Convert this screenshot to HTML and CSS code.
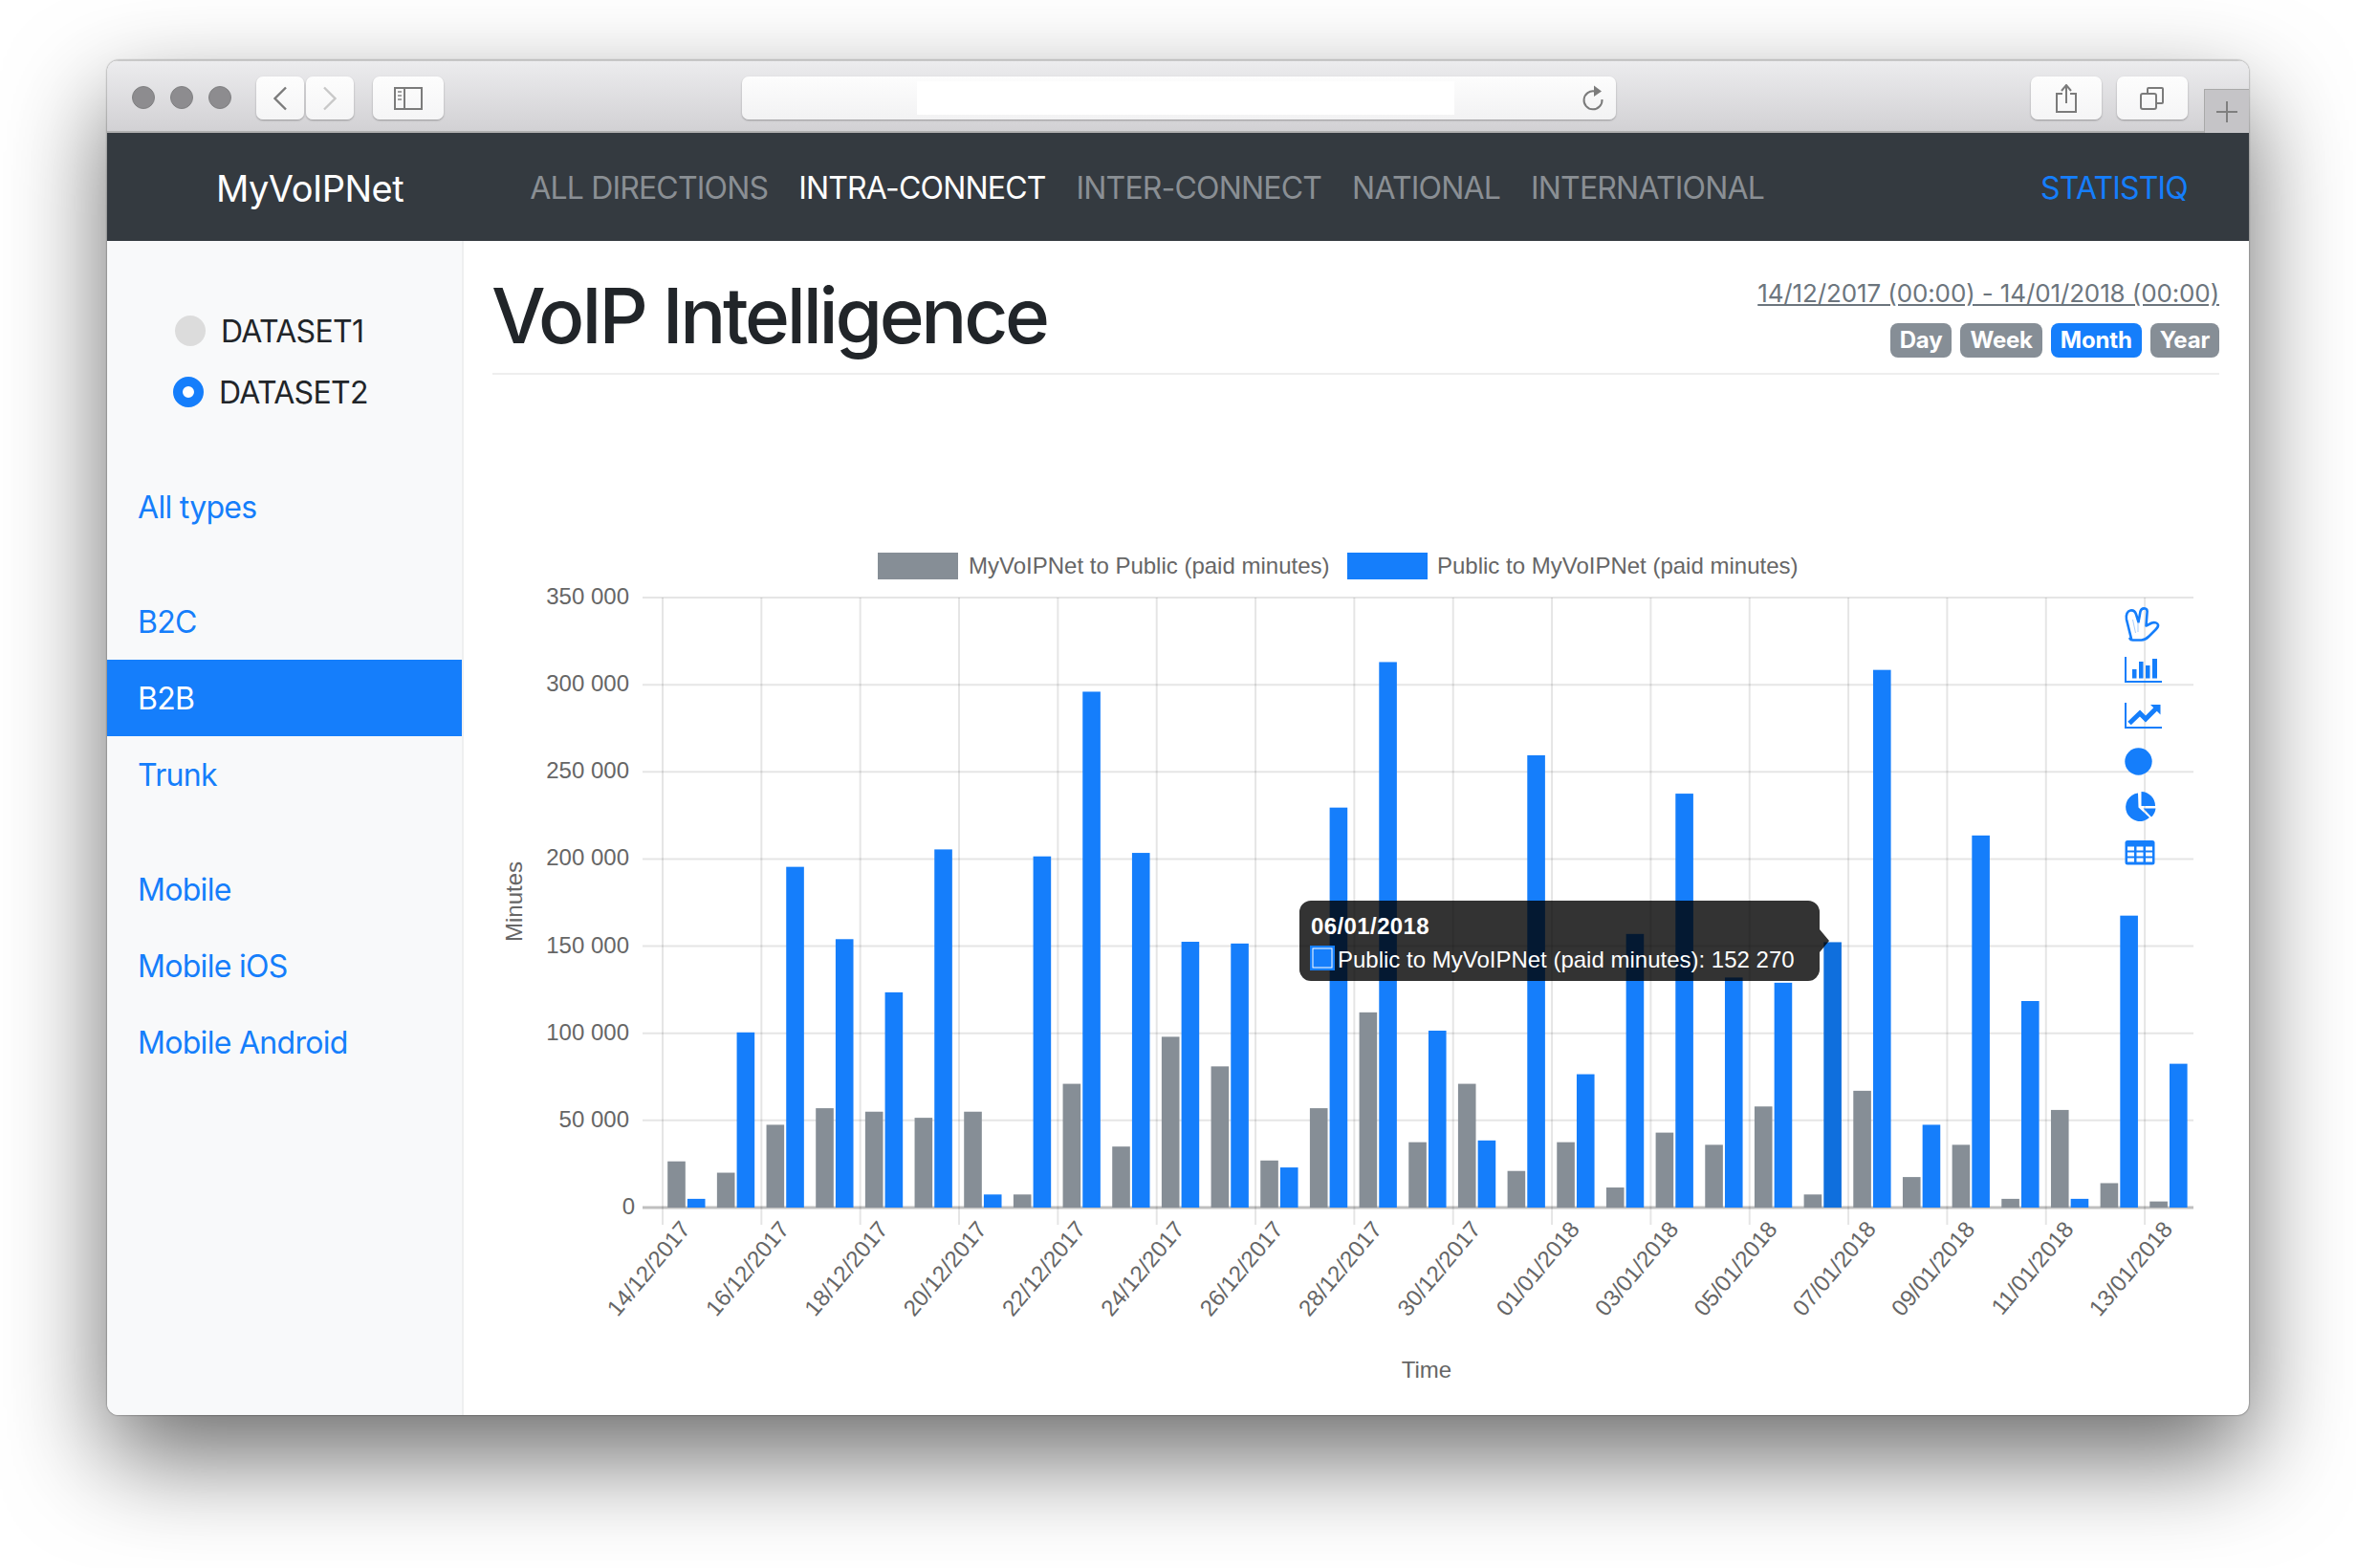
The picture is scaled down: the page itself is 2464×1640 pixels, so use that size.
FILE: index.html
```html
<!DOCTYPE html>
<html lang="en">
<head>
    <meta charset="UTF-8">
    <meta name="viewport" content="width=device-width, initial-scale=1.0">
    <title>VoIP Intelligence</title>
    <link rel="stylesheet" href="styles.css">
</head>
<body>
    <div class="window">
        <div class="toolbar">
            <span class="light"></span>
            <span class="light"></span>
            <span class="light"></span>
            <div class="tool-btn btn-nav first-nav">
                <svg width="16" height="26" viewBox="0 0 16 26"><path d="M14 1.500 2.500 13 14 24.500" fill="none" stroke="#7b7b7b" stroke-width="2.400"/></svg>
            </div>
            <div class="tool-btn btn-nav">
                <svg width="16" height="26" viewBox="0 0 16 26"><path d="M2 1.500 13.500 13 2 24.500" fill="none" stroke="#c8c8c8" stroke-width="2.400"/></svg>
            </div>
            <div class="tool-btn btn-side">
                <svg width="30" height="24" viewBox="0 0 30 24"><rect x="1" y="1" width="28" height="22" fill="none" stroke="#7b7b7b" stroke-width="2"/><path d="M11 1v22" stroke="#7b7b7b" stroke-width="2"/><path d="M4 5h4M4 9h4M4 13h4" stroke="#a0a0a0" stroke-width="2"/></svg>
            </div>
            <div class="address">
                <div class="address-fill"></div>
                <svg class="reload" width="24" height="28" viewBox="0 0 24 28"><path d="M14 6.500A9.500 9.500 0 1 0 21.500 15" fill="none" stroke="#7b7b7b" stroke-width="2"/><path d="M13 0.500 21 6.500 13 12z" fill="#7b7b7b"/></svg>
            </div>
            <div class="tool-btn btn-wide">
                <svg width="24" height="30" viewBox="0 0 24 30"><path d="M8 10H2v19h20V10h-6" fill="none" stroke="#7b7b7b" stroke-width="2"/><path d="M12 2v18M7 7l5-6 5 6" fill="none" stroke="#7b7b7b" stroke-width="2"/></svg>
            </div>
            <div class="tool-btn btn-wide btn-tabs">
                <svg width="26" height="24" viewBox="0 0 26 24"><rect x="1" y="7" width="16" height="16" rx="2" fill="none" stroke="#7b7b7b" stroke-width="2"/><path d="M8 7V2a1 1 0 0 1 1-1h14a1 1 0 0 1 1 1v14a1 1 0 0 1-1 1h-6" fill="none" stroke="#7b7b7b" stroke-width="2"/></svg>
            </div>
            <div class="new-tab">
                <svg width="24" height="24" viewBox="0 0 24 24"><path d="M12 1v22M1 12h22" stroke="#7f7f7f" stroke-width="2"/></svg>
            </div>
        </div>

        <nav class="navbar">
            <a class="brand">MyVoIPNet</a>
            <a class="nav-link">ALL DIRECTIONS</a>
            <a class="nav-link active">INTRA-CONNECT</a>
            <a class="nav-link">INTER-CONNECT</a>
            <a class="nav-link">NATIONAL</a>
            <a class="nav-link">INTERNATIONAL</a>
            <a class="nav-link statistiq">STATISTIQ</a>
        </nav>

        <div class="page">
            <aside class="sidebar">
                <div class="radios">
                    <div class="radio"><span class="radio-mark"></span>DATASET1</div>
                    <div class="radio radio-on"><span class="radio-mark"></span>DATASET2</div>
                </div>
                <a class="side-link group">All types</a>
                <a class="side-link group">B2C</a>
                <a class="side-link active">B2B</a>
                <a class="side-link">Trunk</a>
                <a class="side-link group">Mobile</a>
                <a class="side-link">Mobile iOS</a>
                <a class="side-link">Mobile Android</a>
            </aside>

            <main class="main">
                <header class="head">
                    <h1 class="title">VoIP Intelligence</h1>
                    <div class="range">
                        <a class="dates">14/12/2017 (00:00) - 14/01/2018 (00:00)</a>
                        <div class="badges">
                            <span class="badge">Day</span>
                            <span class="badge">Week</span>
                            <span class="badge badge-on">Month</span>
                            <span class="badge">Year</span>
                        </div>
                    </div>
                </header>
                <div id="chart"></div>
            </main>
        </div>
    </div>
    <script src="chart.js"></script>
</body>
</html>
```

FILE: styles.css
```css
body {
    margin: 0;
    padding: 63px 112px 0;
    height: 1640px;
    box-sizing: border-box;
    background: #fff;
    font-family: Inter, 'Noto Sans', sans-serif;
    color: #212529;
    overflow: hidden;
}

.window {
    height: 1417px;
    display: flex;
    flex-direction: column;
    border-radius: 12px;
    overflow: hidden;
    box-shadow: 0 0 2px rgba(0, 0, 0, 0.6), 0 44px 104px rgba(0, 0, 0, 0.58);
}

.toolbar {
    height: 76px;
    flex: none;
    box-sizing: border-box;
    display: flex;
    align-items: flex-start;
    padding-top: 16px;
    padding-left: 26px;
    background: linear-gradient(to bottom, #ececee, #d2d1d4);
    border-top: 1px solid #c9c9c9;
    border-bottom: 2px solid #afafaf;
}

.light {
    width: 24px;
    height: 24px;
    margin: 10px 16px 0 0;
    border-radius: 50%;
    background: #8d8c8f;
    border: 1px solid #808082;
    box-sizing: border-box;
}

.tool-btn {
    height: 45px;
    box-sizing: border-box;
    display: flex;
    align-items: center;
    justify-content: center;
    background: linear-gradient(to bottom, #fdfdfd, #f5f5f6);
    border-radius: 7px;
    box-shadow: 0 1px 2px rgba(0, 0, 0, 0.3);
}

.btn-nav {
    width: 50px;
    margin-right: 2px;
}

.first-nav {
    margin-left: 10px;
}

.btn-side {
    width: 74px;
    margin-left: 18px;
}

.btn-wide {
    width: 74px;
}

.btn-tabs {
    margin-left: 16px;
}

.address {
    width: 914px;
    height: 45px;
    margin: 0 434px 0 312px;
    position: relative;
    background: linear-gradient(to bottom, #fdfdfd, #f2f2f3);
    border-radius: 7px;
    box-shadow: 0 1px 2px rgba(0, 0, 0, 0.3);
}

.address-fill {
    position: absolute;
    left: 183px;
    top: 5px;
    width: 562px;
    height: 35px;
    background: #fff;
}

.reload {
    position: absolute;
    right: 12px;
    top: 9px;
}

.new-tab {
    width: 47px;
    height: 46px;
    margin: -3px 0 -2px 17px;
    align-self: flex-end;
    box-sizing: border-box;
    display: flex;
    align-items: center;
    justify-content: center;
    background: #c5c4c7;
    border: 1px solid #a9a9a9;
    border-right: 0;
    border-bottom: 0;
}

.navbar {
    height: 113px;
    flex: none;
    box-sizing: border-box;
    display: flex;
    align-items: center;
    padding: 2px 64px 0 114px;
    background: #343a40;
    font-size: 32px;
    letter-spacing: -0.82px;
}

.brand {
    font-size: 38px;
    letter-spacing: -0.5px;
    color: #fff;
    margin-right: 132px;
}

.nav-link {
    color: #8a8f94;
    margin-right: 32px;
    white-space: nowrap;
}

.nav-link.active {
    color: #fff;
}

.statistiq {
    margin: 0 0 0 auto;
    color: #157efb;
}

.page {
    flex: 1;
    display: flex;
    min-height: 0;
}

.sidebar {
    width: 371px;
    flex: none;
    background: #f8f9fa;
    border-right: 2px solid #eeeff0;
    font-size: 32px;
    letter-spacing: -0.7px;
    padding-top: 62px;
}

.radios {
    height: 176px;
}

.radio {
    height: 64px;
    display: flex;
    align-items: center;
    padding-left: 71px;
}

.radio-on {
    padding-left: 69px;
}

.radio-mark {
    width: 32px;
    height: 32px;
    margin-right: 16px;
    border-radius: 50%;
    background: #dcdcdc;
    box-sizing: border-box;
}

.radio-on .radio-mark {
    background: #fff;
    border: 10px solid #157efb;
}

.side-link {
    display: block;
    height: 80px;
    line-height: 82px;
    padding-left: 32px;
    color: #157efb;
}

.side-link.group {
    margin-top: 40px;
}

.side-link.active {
    background: #157efb;
    color: #fff;
}

.radios + .side-link {
    margin-top: 0;
}

.main {
    flex: 1;
    min-width: 0;
    display: flex;
    flex-direction: column;
}

.head {
    height: 138px;
    flex: none;
    margin: 0 31px 0 30px;
    display: flex;
    justify-content: space-between;
    border-bottom: 2px solid #eeeeee;
}

.title {
    margin: 38px 0 0 -1px;
    font-size: 80px;
    line-height: 80px;
    font-weight: 500;
    letter-spacing: -3.3px;
}

.range {
    display: flex;
    flex-direction: column;
    align-items: flex-end;
    padding-top: 38px;
}

.dates {
    font-size: 26px;
    line-height: 34px;
    letter-spacing: -0.12px;
    color: #6c757d;
    text-decoration: underline;
}

.badges {
    display: flex;
    gap: 9px;
    margin-top: 14px;
}

.badge {
    height: 36px;
    line-height: 36px;
    padding: 0 10px;
    border-radius: 8px;
    background: #868e96;
    color: #fff;
    font-size: 24px;
    font-weight: 700;
    letter-spacing: -0.2px;
}

.badge-on {
    background: #157efb;
}

#chart svg {
    display: block;
    font-family: 'Liberation Sans', Arial, sans-serif;
    font-size: 24px;
    fill: #666;
}

.grid {
    stroke: rgba(0, 0, 0, 0.1);
    stroke-width: 2;
}

.zero {
    stroke: rgba(0, 0, 0, 0.25);
    stroke-width: 3;
}

.tip-text {
    fill: #fff;
}

.tip-title {
    font-weight: 700;
    letter-spacing: 0.4px;
}

.tool-icon {
    fill: #157efb;
}
```

FILE: chart.js
```js
// chart is drawn in window coordinates, the viewBox takes care of the offset
const LEFT = 693, ZERO = 1263, DAY = 51.67, PER_50K = 91.14;
const GREY = "#868e96", BLUE = "#157efb";

const grey = [26.5, 20, 47.5, 57, 55, 51.5, 55, 7.5, 71, 35, 98, 81, 27, 57, 112, 37.5, 71, 21, 37.5, 11.5, 43, 36, 58, 7.5, 67, 17.5, 36, 5, 56, 14, 3.5];
const blue = [5, 100.5, 195.500, 154, 123.500, 205.500, 7.5, 201.500, 296, 203.500, 152.500, 151.500, 23, 229.500, 313, 101.500, 38.5, 259.500, 76.500, 157, 237.500, 132, 129, 152.27, 308.500, 47.500, 213.500, 118.500, 5, 167.500, 82.500];

function y(value) {
    return ZERO - value / 50 * PER_50K;
}

function dayLabel(i) {
    let d = new Date(Date.UTC(2017, 11, 14 + i));
    let dd = String(d.getUTCDate()).padStart(2, "0");
    let mm = String(d.getUTCMonth() + 1).padStart(2, "0");
    return `${dd}/${mm}/${d.getUTCFullYear()}`;
}

let s = "";

// grid
for (let i = 0; i <= 7; i++) {
    let py = ZERO - i * PER_50K;
    s += `<line class="${i ? "grid" : "zero"}" x1="672" x2="2294" y1="${py}" y2="${py}"/>`;
    let label = i ? `${i * 50} 000` : "0";
    s += `<text x="${i ? 658 : 664}" y="${py + 7}" text-anchor="end">${label}</text>`;
}
for (let i = 0; i <= 30; i += 2) {
    let px = LEFT + i * DAY;
    s += `<line class="grid" x1="${px}" x2="${px}" y1="625" y2="1281"/>`;
    let tx = px + 24, ty = 1281;
    s += `<text text-anchor="end" x="${tx}" y="${ty + 8}" transform="rotate(-50 ${tx} ${ty})">${dayLabel(i)}</text>`;
}

// bars
const BAR = 18.6;
grey.forEach((v, i) => {
    let x0 = LEFT + i * DAY + 5.2;
    let fill = i === 23 ? "#0f6fdd" : BLUE;
    s += `<rect x="${x0}" y="${y(v)}" width="${BAR}" height="${ZERO - y(v)}" fill="${GREY}"/>`;
    s += `<rect x="${x0 + 20.7}" y="${y(blue[i])}" width="${BAR}" height="${ZERO - y(blue[i])}" fill="${fill}"/>`;
});

// legend
s += `<rect x="918" y="578" width="84" height="28" fill="${GREY}"/>`;
s += `<text x="1013" y="600">MyVoIPNet to Public (paid minutes)</text>`;
s += `<rect x="1409" y="578" width="84" height="28" fill="${BLUE}"/>`;
s += `<text x="1503" y="600">Public to MyVoIPNet (paid minutes)</text>`;

// axis titles
s += `<text x="1492" y="1441" text-anchor="middle">Time</text>`;
s += `<text text-anchor="middle" transform="translate(546 943) rotate(-90)">Minutes</text>`;

// chart type icons
s += `<g class="tool-icon" transform="translate(-2 0)">
    <path fill="none" stroke="${BLUE}" stroke-width="2.6" stroke-linejoin="round" d="M2231 668 2226 648c-1-5 1-9 4-9.500 3-.5 5 1 6 4l2.500 8 2-11c1-3 3-3.500 5-3 2 .5 2.500 2 2 5l-1 13 6-3c3-1 6 0 6.500 2 .5 2-1 3.500-2.500 5l-7 7c-2 2-4 4-8 4h-9c-1.500 0-2.500-.5-3-1.500z"/>
    <path fill="none" stroke="#a9cdfb" stroke-width="1" d="M2232.500 648l3 14M2238 651v10"/>
    <path fill="none" stroke="${BLUE}" stroke-width="2" d="M2225 687v26h38"/>
    <rect x="2232" y="700" width="4.500" height="9.500"/><rect x="2239" y="692" width="4.500" height="17.500"/><rect x="2246" y="696" width="4.500" height="13.500"/><rect x="2253" y="689" width="5" height="20.500"/>
    <path fill="none" stroke="${BLUE}" stroke-width="2" d="M2225 735v26h38"/>
    <path fill="none" stroke="${BLUE}" stroke-width="5" d="M2229 756.500 2240 746l6 6 12-12"/>
    <path d="M2251 737h10.500v10.500z"/>
    <circle cx="2238.500" cy="796.500" r="14.200"/>
    <path d="M2238 829.500A14.800 14.800 0 1 0 2250 855L2238.500 844.500z"/>
    <path d="M2241.500 843V828a15 15 0 0 1 14.500 15z"/>
    <path d="M2243.500 845.500H2256.500a14 14 0 0 1-4.500 9z"/>
    <rect x="2224.500" y="879" width="31" height="25.500" rx="2.500"/>
    <path fill="#fff" d="M2227 885.500h7v4h-7zM2236.500 885.500h7v4h-7zM2246 885.500h7v4h-7zM2227 891.500h7v4h-7zM2236.500 891.500h7v4h-7zM2246 891.500h7v4h-7zM2227 897.500h7v4h-7zM2236.500 897.500h7v4h-7zM2246 897.500h7v4h-7z"/>
</g>`;

// tooltip
s += `<path fill="rgba(0,0,0,0.8)" d="M1371 942H1891a12 12 0 0 1 12 12V972L1913 984 1903 996V1014a12 12 0 0 1-12 12H1371a12 12 0 0 1-12-12V954a12 12 0 0 1 12-12z"/>`;
s += `<text class="tip-text tip-title" x="1371" y="977">06/01/2018</text>`;
s += `<rect x="1370" y="989" width="26" height="26" fill="${BLUE}"/>`;
s += `<rect x="1373" y="992" width="20" height="20" fill="${BLUE}" stroke="#fff" stroke-width="1"/>`;
s += `<text class="tip-text" x="1399" y="1012">Public to MyVoIPNet (paid minutes): 152 270</text>`;

document.getElementById("chart").innerHTML =
    `<svg width="1867" height="1088" viewBox="485 392 1867 1088">${s}</svg>`;
```
